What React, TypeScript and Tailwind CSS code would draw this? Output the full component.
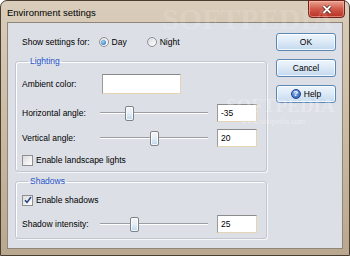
import React from 'react';

const font = { fontFamily: '"Liberation Sans", Arial, sans-serif' };

const Radio = ({ checked }: { checked?: boolean }) => (
  <span className="w-[10px] h-[10px] rounded-full border border-[#8e9196] bg-gradient-to-br from-[#d8dadf] to-white flex items-center justify-center">
    {checked && <span className="w-[5px] h-[5px] rounded-full bg-[radial-gradient(circle_at_40%_35%,#9fd3f5,#1f66b5)]" />}
  </span>
);

const Check = ({ checked }: { checked?: boolean }) => (
  <span className="w-[11px] h-[11px] border border-[#8f8f8f] bg-gradient-to-br from-[#dcdcdc] to-white flex items-center justify-center">
    {checked && (
      <svg width="8" height="8" viewBox="0 0 8 8">
        <path d="M1 4.2 L3 6.4 L7 1" fill="none" stroke="#233c8c" strokeWidth="1.5" />
      </svg>
    )}
  </span>
);

const Field = ({ value, w = 40, h = 18 }: { value?: string; w?: number; h?: number }) => (
  <div
    className="bg-white border border-t-[#8a8a8a] border-l-[#9a9a9a] border-r-[#e6d4b4] border-b-[#e6d4b4] flex items-center pl-[3px] text-[8.5px] text-black"
    style={{ width: w, height: h }}
  >
    {value}
  </div>
);

const Slider = ({ pos }: { pos: number }) => (
  <div className="relative w-[108px] h-[16px] flex items-center">
    <div className="absolute left-0 right-0 top-[7px] h-[2px] border-t border-t-[#9c9ea3] border-b border-b-white" />
    <div
      className="relative w-[9px] h-[15px] rounded-[2px] border border-[#7f8388] bg-gradient-to-b from-[#f6f6f6] via-[#e4eef7] to-[#bcd6ee] shadow-[inset_0_0_0_1px_rgba(255,255,255,0.8)]"
      style={{ marginLeft: pos }}
    />
  </div>
);

const Btn = ({ children }: { children: React.ReactNode }) => (
  <button className="w-[60px] h-[18px] rounded-[3px] border border-[#5b87b5] bg-gradient-to-b from-[#eef5fc] via-[#dce9f6] to-[#c3d9ee] shadow-[inset_0_0_0_1px_rgba(255,255,255,0.75)] flex items-center justify-center gap-[3px] text-[8.5px] text-black">
    {children}
  </button>
);

const Group = ({ title, children, className }: { title: string; children: React.ReactNode; className?: string }) => (
  <fieldset className={`rounded-[3px] border border-[#c2c6ce] shadow-[inset_1px_1px_0_#fff,1px_1px_0_#f5f6f8] pl-[6px] pr-[9px] ${className}`}>
    <legend className="ml-[6px] px-[2px] text-[8.5px] leading-[10px] text-[#2552c9]">{title}</legend>
    {children}
  </fieldset>
);

export default function App() {
  return (
    <div className="w-[350px] h-[256px] relative overflow-hidden" style={font}>
      <div className="w-full h-full rounded-t-[7px] border border-[#4a3e31] bg-gradient-to-b from-[#d9cdbb] via-[#cbbba4] to-[#b9a78f] flex flex-col">
        {/* title bar */}
        <div className="h-[21px] flex items-start justify-between pl-[6px] pr-[4px]">
          <span className="mt-[6px] text-[9.5px] leading-[11px] text-black">Environment settings</span>
          <div className="w-[37px] h-[18px] -mt-px rounded-b-[4px] border border-[#6e2219] bg-gradient-to-b from-[#e8a290] via-[#d1584a] to-[#b73122] shadow-[inset_0_0_0_1px_rgba(255,200,190,0.5)] flex items-center justify-center">
            <svg width="10" height="9" viewBox="0 0 10 9">
              <path d="M1.5 1 L8.5 8 M8.5 1 L1.5 8" stroke="#4a1a14" strokeWidth="3.2" />
              <path d="M1.5 1 L8.5 8 M8.5 1 L1.5 8" stroke="#fff" strokeWidth="1.8" />
            </svg>
          </div>
        </div>

        {/* client */}
        <div className="mx-[6px] h-[227px] border border-[#8e8678] bg-[#dcdfe6] flex gap-[9px] pl-[7px] text-[8.5px] text-black">
          <div className="w-[252px] flex flex-col">
            <div className="mt-[12px] h-[14px] flex items-center pl-[7px]">
              <span>Show settings for:</span>
              <span className="ml-[9px]"><Radio checked /></span>
              <span className="ml-[3px]">Day</span>
              <span className="ml-[20px]"><Radio /></span>
              <span className="ml-[3px]">Night</span>
            </div>

            <Group title="Lighting" className="mt-[7px] pt-[8px] pb-[5px]">
              <div className="flex items-center h-[20px]">
                <span className="w-[80px]">Ambient color:</span>
                <Field w={79} h={20} />
              </div>
              <div className="flex items-center h-[18px] mt-[10px]">
                <span className="w-[78px]">Horizontal angle:</span>
                <Slider pos={25} />
                <span className="ml-[9px]"><Field value="-35" /></span>
              </div>
              <div className="flex items-center h-[18px] mt-[7px]">
                <span className="w-[78px]">Vertical angle:</span>
                <Slider pos={50} />
                <span className="ml-[9px]"><Field value="20" /></span>
              </div>
              <div className="flex items-center h-[12px] mt-[7px] gap-[3px]">
                <Check />
                <span>Enable landscape lights</span>
              </div>
            </Group>

            <Group title="Shadows" className="mt-[4px] pt-[8px] pb-[5px]">
              <div className="flex items-center h-[12px] gap-[3px]">
                <Check checked />
                <span>Enable shadows</span>
              </div>
              <div className="flex items-center h-[18px] mt-[9px]">
                <span className="w-[78px]">Shadow intensity:</span>
                <Slider pos={30} />
                <span className="ml-[9px]"><Field value="25" /></span>
              </div>
            </Group>
          </div>

          <div className="mt-[10px] flex flex-col gap-[8px]">
            <Btn>OK</Btn>
            <Btn>Cancel</Btn>
            <Btn>
              <span className="w-[10px] h-[10px] rounded-full bg-[radial-gradient(circle_at_40%_35%,#8fb8f0,#1d4fb0)] border border-[#1b3f8a] text-white text-[8px] font-bold leading-none flex items-center justify-center">?</span>
              <span>Help</span>
            </Btn>
          </div>
        </div>
      </div>

      {/* watermark */}
      <span className="absolute left-[162px] top-[-4px] text-[30px] font-bold text-white/15 pointer-events-none" style={{ fontFamily: '"Liberation Serif", serif' }}>SOFTPEDIA</span>
      <span className="absolute left-[226px] top-[92px] text-[19px] font-bold text-white/25 pointer-events-none" style={{ fontFamily: '"Liberation Serif", serif' }}>SOFTPEDIA</span>
      <span className="absolute left-[241px] top-[116px] text-[8px] text-white/40 pointer-events-none" style={{ fontFamily: '"Liberation Serif", serif' }}>www.softpedia.com</span>
    </div>
  );
}
